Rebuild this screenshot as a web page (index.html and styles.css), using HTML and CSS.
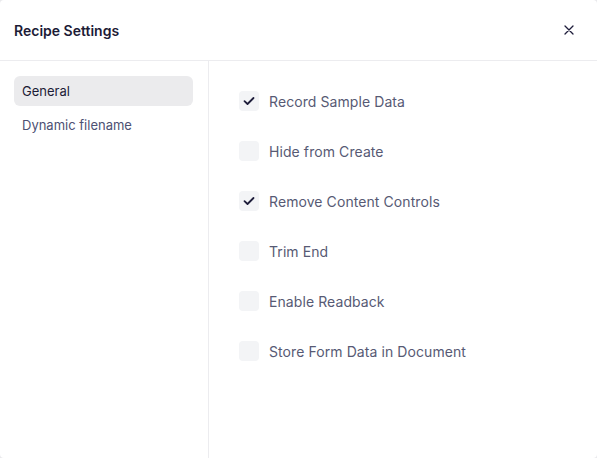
FILE: index.html
```html
<!DOCTYPE html>
<html>
<head>
<meta charset="utf-8">
<link rel="stylesheet" href="styles.css">
</head>
<body>
<div class="modal">
  <header class="header">
    <h1 class="title">Recipe Settings</h1>
    <button class="close" aria-label="Close">
      <svg width="10" height="10" viewBox="0 0 10 10"><path d="M1 1L9 9M9 1L1 9" stroke="#1e1d3b" stroke-width="1.3" stroke-linecap="round"/></svg>
    </button>
  </header>
  <div class="body">
    <nav class="sidebar">
      <div class="nav-item active">General</div>
      <div class="nav-item">Dynamic filename</div>
    </nav>
    <main class="content">
      <label class="row"><span class="box checked"><svg width="12" height="10" viewBox="0 0 12 10"><path d="M1.5 5.2L4.5 8L10.5 2" fill="none" stroke="#1e1d3b" stroke-width="1.8" stroke-linecap="round" stroke-linejoin="round"/></svg></span><span class="label">Record Sample Data</span></label>
      <label class="row"><span class="box"></span><span class="label">Hide from Create</span></label>
      <label class="row"><span class="box checked"><svg width="12" height="10" viewBox="0 0 12 10"><path d="M1.5 5.2L4.5 8L10.5 2" fill="none" stroke="#1e1d3b" stroke-width="1.8" stroke-linecap="round" stroke-linejoin="round"/></svg></span><span class="label">Remove Content Controls</span></label>
      <label class="row"><span class="box"></span><span class="label">Trim End</span></label>
      <label class="row"><span class="box"></span><span class="label">Enable Readback</span></label>
      <label class="row"><span class="box"></span><span class="label">Store Form Data in Document</span></label>
    </main>
  </div>
</div>
</body>
</html>
```
FILE: styles.css
```css
* { box-sizing: border-box; }
html, body { margin: 0; padding: 0; background: #e9e9ec; }
body { font-family: Inter, "Noto Sans", sans-serif; }
.modal {
  width: 597px;
  height: 458px;
  background: #fff;
  border-radius: 4px;
  display: flex;
  flex-direction: column;
  overflow: hidden;
}
.header {
  height: 61px;
  border-bottom: 1px solid #ececef;
  display: flex;
  align-items: center;
  justify-content: space-between;
  padding: 0 23px 0 14px;
  flex-shrink: 0;
}
.title {
  margin: 0;
  font-size: 14px;
  font-weight: 600;
  color: #1c1b36;
}
.close {
  border: 0;
  background: none;
  padding: 0;
  width: 10px;
  height: 10px;
  display: flex;
  cursor: pointer;
}
.body { flex: 1; display: flex; }
.sidebar {
  width: 209px;
  border-right: 1px solid #ececef;
  padding: 15px 15px 0 14px;
  display: flex;
  flex-direction: column;
  gap: 4px;
}
.nav-item {
  height: 30px;
  border-radius: 6px;
  padding: 0 8px;
  display: flex;
  align-items: center;
  font-size: 13px;
  color: #4d5173;
}
.nav-item.active {
  background: #ebebed;
  color: #1c1b36;
}
.content {
  flex: 1;
  padding: 30px 30px 0 30px;
  display: flex;
  flex-direction: column;
  gap: 30px;
}
.row {
  display: flex;
  align-items: center;
  gap: 10px;
  height: 20px;
}
.box {
  width: 20px;
  height: 20px;
  border-radius: 4px;
  background: #f3f4f6;
  display: flex;
  align-items: center;
  justify-content: center;
}
.label {
  font-size: 14px;
  letter-spacing: 0.08px;
  color: #575a74;
}
```
